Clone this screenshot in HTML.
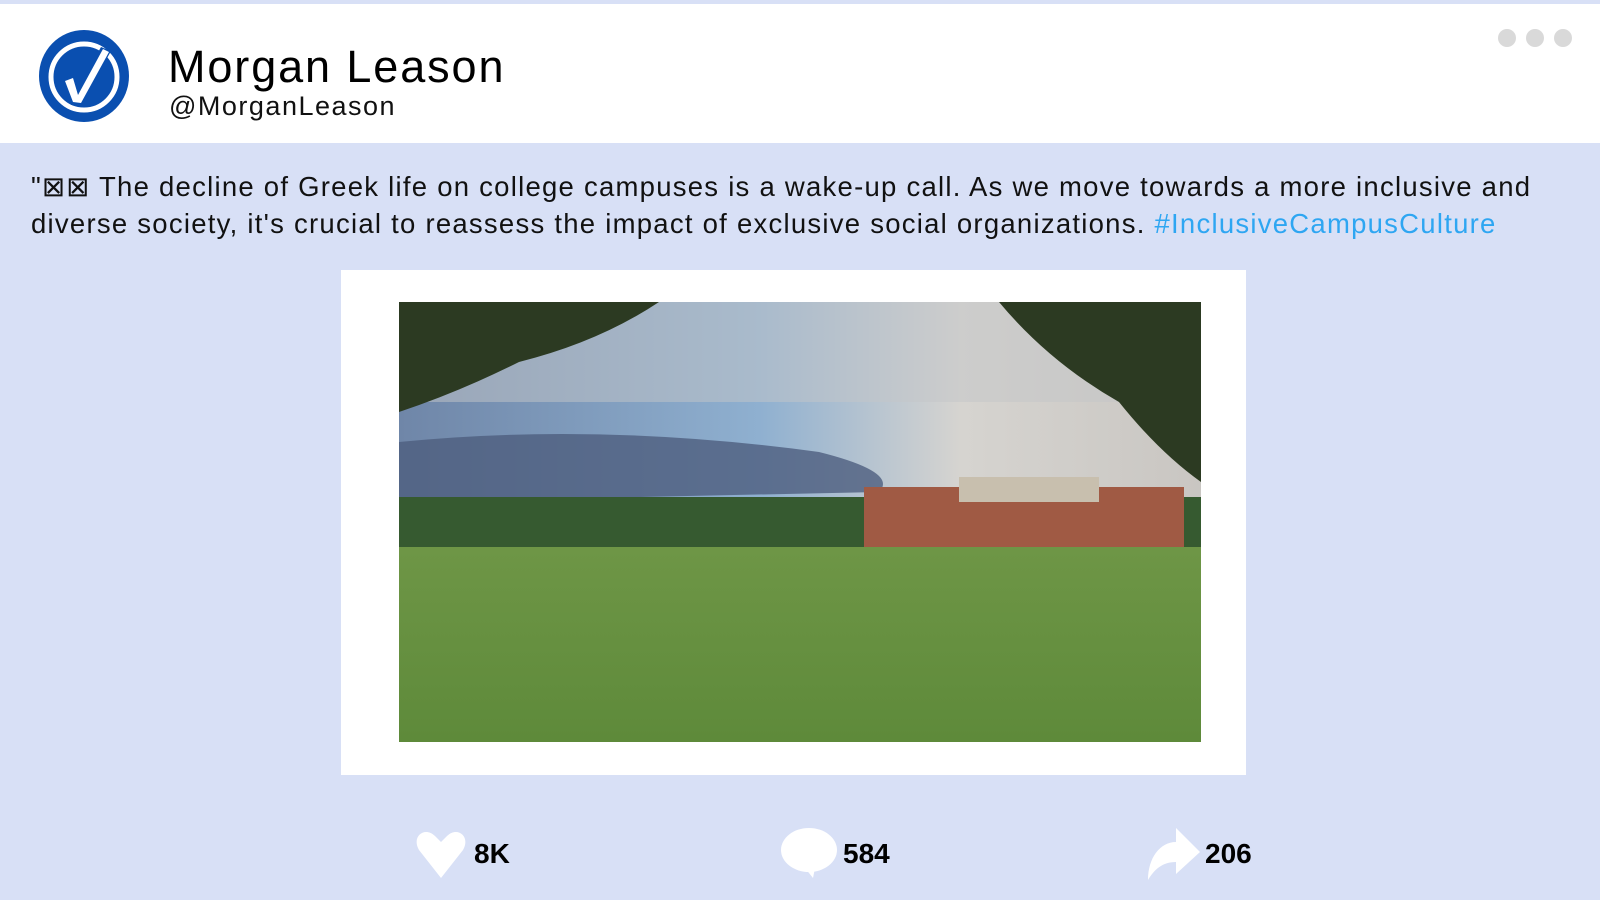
<!DOCTYPE html>
<html><head><meta charset="utf-8"><style>
*{margin:0;padding:0;box-sizing:border-box}
body{width:1600px;height:900px;background:#d8e0f6;font-family:"Liberation Sans",sans-serif;position:relative;overflow:hidden}
.hdr{position:absolute;left:0;top:4px;width:1600px;height:139px;background:#fff}
.name{position:absolute;left:168px;top:41px;font-size:45px;color:#000;letter-spacing:1.9px}
.handle{position:absolute;left:169px;top:91px;font-size:27px;color:#111;letter-spacing:1.5px}
.dot{position:absolute;top:29px;width:18px;height:18px;border-radius:50%;background:#d9d9d9}
.txt{position:absolute;left:31px;top:168px;width:1555px;font-size:27.5px;line-height:37px;color:#111;letter-spacing:1.25px}
.txt span{color:#2ea6f2}
.frame{position:absolute;left:341px;top:270px;width:905px;height:505px;background:#fff}
.img{position:absolute;left:399px;top:302px;width:802px;height:440px;overflow:hidden}
.stat{position:absolute;top:838px;font-size:28px;font-weight:bold;color:#000}
</style></head><body>
<div class="hdr"></div>
<svg style="position:absolute;left:37px;top:29px" width="94" height="94" viewBox="0 0 94 94">
<ellipse cx="47" cy="47" rx="45" ry="46" fill="#0a4fb0"/>
<circle cx="47" cy="48" r="33" fill="none" stroke="#fff" stroke-width="5"/>
<path d="M24 50 L36 46 L40 62 L64 18 L74 22 L44 76 L34 76 Z" fill="#0a4fb0"/>
<path d="M28 52 L36 49 L41 66 L66 20 L72 23 L44 74 L36 73 Z" fill="#fff"/>
</svg>
<div class="name">Morgan Leason</div>
<div class="handle">@MorganLeason</div>
<div class="dot" style="left:1498px"></div><div class="dot" style="left:1526px"></div><div class="dot" style="left:1554px"></div>
<div class="txt">"⊠⊠ The decline of Greek life on college campuses is a wake-up call. As we move towards a more inclusive and diverse society, it's crucial to reassess the impact of exclusive social organizations. <span>#InclusiveCampusCulture</span></div>
<div class="frame"></div>
<div class="img">
<svg width="802" height="440" viewBox="0 0 802 440">
<defs>
<linearGradient id="sky" x1="0" y1="0" x2="1" y2="0"><stop offset="0" stop-color="#6f86a8"/><stop offset="0.45" stop-color="#8fb0d0"/><stop offset="0.7" stop-color="#d6d4d0"/><stop offset="1" stop-color="#c9c6c2"/></linearGradient>
<linearGradient id="g" x1="0" y1="0" x2="0" y2="1"><stop offset="0" stop-color="#6e9646"/><stop offset="1" stop-color="#5e8a3a"/></linearGradient>
</defs>
<rect width="802" height="250" fill="url(#sky)"/>
<rect y="0" width="802" height="100" fill="#c4c6c8" opacity="0.5"/>
<path d="M0 140 Q200 120 420 150 Q500 170 480 190 L0 200 Z" fill="#4d5e7e" opacity="0.8"/>
<rect y="195" width="802" height="50" fill="#365a30"/>
<rect x="465" y="185" width="320" height="60" fill="#a05a44"/>
<rect x="560" y="175" width="140" height="25" fill="#c8bfae"/>
<rect y="245" width="802" height="195" fill="url(#g)"/>
<path d="M0 0 L260 0 Q200 40 120 60 Q60 90 0 110 Z" fill="#2c3a22"/>
<path d="M600 0 L802 0 L802 180 Q760 150 720 100 Q650 60 600 0 Z" fill="#2c3a22"/>
</svg></div>
<svg style="position:absolute;left:415px;top:830px" width="52" height="48" viewBox="0 0 52 48"><path d="M26 48 L4 20 C-4 6 10 -4 20 6 L26 12 L32 6 C42 -4 56 6 48 20 Z" fill="#fff"/></svg>
<div class="stat" style="left:474px">8K</div>
<svg style="position:absolute;left:781px;top:828px" width="56" height="50" viewBox="0 0 56 50"><ellipse cx="28" cy="22" rx="28" ry="22" fill="#fff"/><path d="M24 40 L32 50 L34 40 Z" fill="#fff"/></svg>
<div class="stat" style="left:843px">584</div>
<svg style="position:absolute;left:1148px;top:828px" width="54" height="52" viewBox="0 0 54 52"><path d="M28 0 L52 24 L28 46 L28 34 C14 34 6 42 0 52 C0 30 12 14 28 14 Z" fill="#fff"/></svg>
<div class="stat" style="left:1205px">206</div>
</body></html>
